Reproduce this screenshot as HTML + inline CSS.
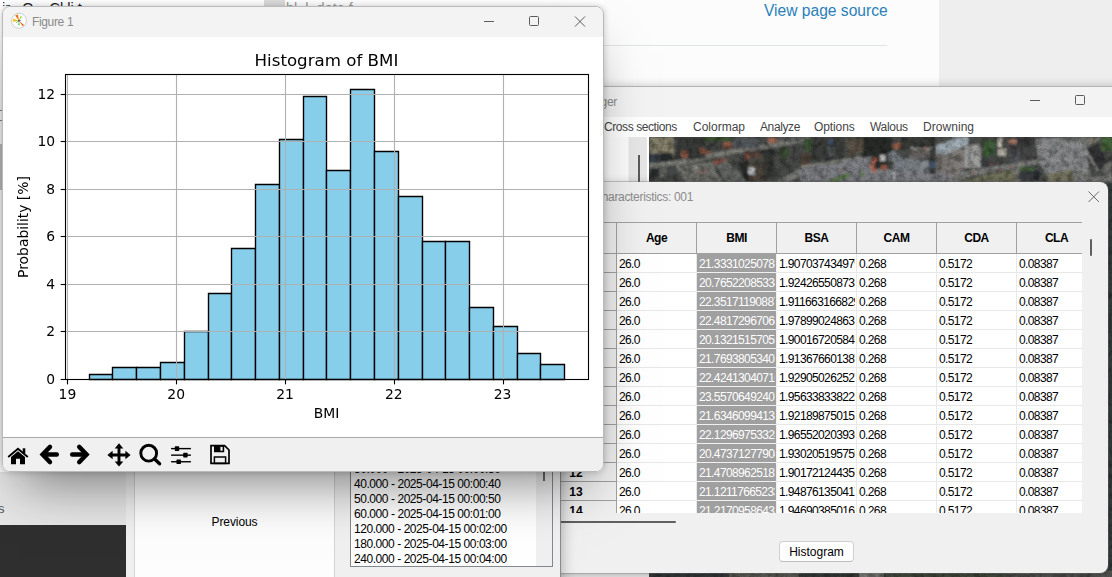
<!DOCTYPE html>
<html lang="en">
<head>
<meta charset="utf-8">
<title>Figure 1</title>
<style>
*{box-sizing:border-box;margin:0;padding:0}
html,body{width:1112px;height:577px;overflow:hidden;background:#fcfcfc}
body{font-family:"Liberation Sans",sans-serif;font-size:12px;color:#000;position:relative}
.abs{position:absolute}
#screen{position:absolute;left:0;top:0;width:1112px;height:577px;overflow:hidden;background:#fcfcfc}
/* browser page */
#rtd-side{left:939px;top:0;width:173px;height:90px;background:#eeeeee}
#vps{left:764px;top:1px;font-size:15.6px;line-height:19px;color:#2980b9;letter-spacing:0;white-space:nowrap}
#rtd-hr{left:590px;top:45px;width:297px;height:1px;background:#e1e4e5}
#topfrag{left:0;top:0;width:604px;height:6px;overflow:hidden;background:#fff}
#topfrag span{position:absolute;top:-1px;font-size:14.5px;line-height:18px;white-space:nowrap}
#leftstrip{left:0;top:0;width:3px;height:480px;background:#fff}
/* manager */
#mgr{left:380px;top:86px;width:760px;height:520px;background:#f0f0f0;border-top:1px solid #b4b4b4;box-shadow:0 0 9px rgba(0,0,0,.22)}
#mgr .tb{left:0;top:0;width:100%;height:30px;background:#f3f3f3}
#mgr .title{right:523px;top:8px;color:#8a8a8a;white-space:nowrap;line-height:15px;letter-spacing:-.3px}
#mgr .menu{left:0;top:30px;width:100%;height:20px;background:#fff}
#mgr .menu span{position:absolute;top:3px;line-height:14px;color:#444;white-space:nowrap}
#mgr .panel{left:224px;top:50px;width:45px;height:46px;background:linear-gradient(90deg,#fff 0,#fbfbfb 24px,#e6e6e6 25px,#e6e6e6 43px,#fff 43px)}
#mgr .pline{left:258px;top:68px;width:2px;height:28px;background:#5a5a5a}
#aerial{left:649px;top:137px;width:463px;height:440px}
/* dialog */
#dlg{left:430px;top:182px;width:678px;height:391px;background:#f0f0f0;border-radius:8px;box-shadow:0 0 0 1px rgba(120,120,120,.35),0 2px 10px rgba(0,0,0,.3);overflow:hidden}
#dlg .title{right:415px;top:8px;color:#8c8c8c;white-space:nowrap;line-height:15px;letter-spacing:-.32px}
.grid{left:130px;top:40px;width:522px;height:291px;overflow:hidden;background:#fff}
.grid .hd{position:absolute;top:0;height:32px;background:#f0f0f0;border-top:1px solid #a0a0a0;border-bottom:1px solid #a0a0a0;border-right:1px solid #a0a0a0;font-weight:bold;text-align:center;line-height:31px;letter-spacing:-.5px}
.grid .rl{position:absolute;left:0;width:57px;height:19px;background:#f0f0f0;border-bottom:1px solid #a0a0a0;border-right:1px solid #a0a0a0;font-weight:bold;line-height:20px}
.grid .rl b{position:absolute;left:0;width:32px;text-align:center}
.grid .c{position:absolute;height:19px;width:80px;border-right:1px solid #e8e8e8;border-bottom:1px solid #e8e8e8;line-height:20px;padding-left:2px;white-space:nowrap;overflow:hidden;letter-spacing:-.62px;background:#fff}
.grid .c span{display:block;width:76px;overflow:hidden}
.grid .c.s{background:#a0a0a0;color:#fff;border-right-color:#f0f0f0;border-bottom-color:#f0f0f0}
#hbtn{left:349px;top:359px;width:75px;height:21px;background:#fdfdfd;border:1px solid #d0d0d0;border-bottom-color:#bcbcbc;border-radius:4px;text-align:center;line-height:20px}
/* left window */
#lw{left:126px;top:300px;width:435px;height:300px;background:#f0f0f0;border-right:1px solid #8a8a8a;box-shadow:0 0 14px rgba(0,0,0,.32)}
#prev{left:8px;top:100px;width:201px;height:200px;background:#fdfdfd;border:1px solid #d4d4d4;text-align:center}
#prev span{position:absolute;left:0;width:100%;top:114px;line-height:15px;letter-spacing:-.1px}
#lb{left:224px;top:120px;width:203px;height:147px;background:#fff;border:1px solid #828790;overflow:hidden}
#lb .sb{left:185px;top:0;width:17px;height:100%;background:#f0f0f0}
#lb .th{left:192px;top:40px;width:2px;height:20px;background:#6a6a6a}
#lb div.l{position:absolute;left:3px;height:15px;line-height:15px;white-space:nowrap;letter-spacing:-.44px}
/* bottom-left */
#bl1{left:0;top:472px;width:126px;height:53px;background:#e6e6e6}
#bl1 span{position:absolute;left:-2px;top:29px;font-size:13px;color:#555}
#bl2{left:0;top:525px;width:126px;height:52px;background:#2f2f2f}
/* figure window */
#fig{left:2px;top:6px;width:602px;height:466px;border:1px solid #b9b9b9;border-radius:8px;background:#f0f0f0;overflow:hidden;}
#figshadow{left:2px;top:6px;width:602px;height:466px;border-radius:8px;box-shadow:0 0 6px rgba(0,0,0,.2),0 28px 52px -18px rgba(0,0,0,.5)}
#fig .tb{left:0;top:0;width:600px;height:30px;background:#f3f3f3}
#fig .title{left:29px;top:8px;color:#8a8a8a;line-height:15px;letter-spacing:-.35px;white-space:nowrap}
#fig .chart{position:absolute;left:0;top:30px;will-change:transform}
#fig .tool{left:0;top:430px;width:600px;height:34px;background:#f0f0f0;border-top:1px solid #a8a8a8}
</style>
</head>
<body>
<div id="screen">
<!-- background browser page -->
<div class="abs" id="rtd-side"></div>
<div class="abs" id="topfrag"><span style="left:2px;color:#222">ir &nbsp; O &nbsp;&nbsp; Cl li t</span><span style="left:286px;color:#999">bl &nbsp;l &nbsp;data f</span><i class="abs" style="left:264px;top:0;width:21px;height:6px;background:#dcdcdc"></i></div>
<div class="abs" id="vps">View page source</div>
<div class="abs" id="rtd-hr"></div>
<div class="abs" id="leftstrip"><i class="abs" style="left:0;top:110px;width:3px;height:1px;background:#888"></i><i class="abs" style="left:0;top:120px;width:3px;height:1px;background:#888"></i><i class="abs" style="left:0;top:144px;width:3px;height:46px;background:#c2c2c2"></i></div>

<!-- manager window -->
<div class="abs" id="mgr">
 <div class="abs tb"></div>
 <div class="abs title">WOLF - Manager</div>
 <svg class="abs" style="left:640px;top:3px" width="80" height="20" viewBox="0 0 80 20"><path d="M10 10.5H20" stroke="#5a5a5a" stroke-width="1" fill="none"/><rect x="55.5" y="5.5" width="9" height="9" rx="1" fill="none" stroke="#5a5a5a"/></svg>
 <div class="abs menu">
  <span style="left:224px;letter-spacing:-.42px">Cross sections</span>
  <span style="left:313px">Colormap</span>
  <span style="left:380px;letter-spacing:-.38px">Analyze</span>
  <span style="left:434px;letter-spacing:-.1px">Options</span>
  <span style="left:490px;letter-spacing:-.3px">Walous</span>
  <span style="left:543px;letter-spacing:.05px">Drowning</span>
 </div>
 <div class="abs panel"></div><div class="abs pline"></div>
</div>
<svg class="abs" id="aerial" width="463" height="440" viewBox="0 0 463 440">
<defs><filter id="ab" x="0" y="0" width="100%" height="100%"><feGaussianBlur stdDeviation="0.9"/></filter>
<filter id="an" x="0" y="0" width="100%" height="100%"><feTurbulence type="fractalNoise" baseFrequency="0.7" numOctaves="2" seed="7" result="n"/><feColorMatrix type="matrix" values="0 0 0 0 0  0 0 0 0 0  0 0 0 0 0  1.4 0 0 0 -0.45"/></filter>
<filter id="an2" x="0" y="0" width="100%" height="100%"><feTurbulence type="fractalNoise" baseFrequency="0.16" numOctaves="3" seed="3"/><feColorMatrix type="matrix" values="0 0 0 0 0  0 0 0 0 0  0 0 0 0 0  2.2 0 0 0 -0.85"/></filter></defs>
<rect width="463" height="440" fill="#4b4e4b"/><rect x="459" y="44" width="4" height="396" fill="#3a4444"/><rect x="0" y="434" width="100" height="6" fill="#3a3f3f"/><rect x="80" y="434" width="70" height="6" fill="#66685f"/><rect x="150" y="434" width="60" height="6" fill="#3d423f"/><rect x="210" y="434" width="25" height="6" fill="#8a8a86"/><rect x="235" y="434" width="120" height="6" fill="#4a5245"/><rect x="355" y="434" width="108" height="6" fill="#5a5c58"/>
<g filter="url(#ab)">
<rect x="0" y="0" width="25" height="20" fill="#8b8670"/>
<rect x="0" y="16.7" width="11" height="10.8" fill="#3b424c"/>
<rect x="11" y="16" width="13" height="11" fill="#2b2f2e"/>
<rect x="0" y="30" width="28" height="15" fill="#4a4c48"/>
<rect x="2" y="31" width="8" height="9" fill="#2f3231"/>
<rect x="11" y="32" width="6" height="10" fill="#6e6f6a"/>
<polyline points="0,29 32,25.3 68,18 96.7,12.4 140,5.2 160,1.5" fill="none" stroke="#85857f" stroke-width="5"/>
<polyline points="27,26 40,45" fill="none" stroke="#777873" stroke-width="5"/>
<polygon points="34,29 63.6,24.6 68,35.4 73.7,45 42,45" fill="#74756f"/>
<rect x="28.4" y="0.5" width="28" height="21.5" fill="#3a3c3a"/>
<rect x="32" y="13.8" width="7" height="7.2" fill="#8d5a48"/>
<rect x="50.7" y="11" width="11.3" height="5.7" fill="#8a5847"/>
<rect x="53.5" y="0" width="28.8" height="4.5" fill="#3c5433"/>
<rect x="56.4" y="4.5" width="17.6" height="9.5" fill="#454745"/>
<rect x="74.4" y="5.2" width="8.6" height="5.8" fill="#a66a55"/>
<rect x="83.8" y="1.6" width="27.2" height="9.9" fill="#565b5f"/>
<rect x="111" y="0" width="8" height="8" fill="#4a4d4c"/>
<rect x="119" y="0.9" width="8.7" height="5" fill="#a66a55"/>
<rect x="128" y="0" width="13" height="4" fill="#55585a"/>
<rect x="141" y="0" width="10" height="4.5" fill="#6a6e70"/>
<polygon points="65,24 76.6,21.7 99.6,45 76.6,45" fill="#6b6d6a"/>
<rect x="64.8" y="22.5" width="6" height="5" fill="#94594a"/>
<rect x="72.3" y="21" width="4.3" height="4.3" fill="#94594a"/>
<polygon points="88,25.3 99.6,23.9 105.4,45 96.7,45" fill="#2a2d2b"/>
<rect x="99.6" y="25.3" width="15.8" height="19.7" fill="#514a40"/>
<rect x="98.9" y="30.4" width="7.1" height="7.2" fill="#b8bcc0"/>
<rect x="95.3" y="13.8" width="17.2" height="7.9" fill="#5c4a40"/>
<rect x="96" y="17" width="3.6" height="6" fill="#94594a"/>
<rect x="112.5" y="12.4" width="13" height="5" fill="#2e3030"/>
<rect x="114" y="17.4" width="11.5" height="23.6" fill="#3a3b38"/>
<polygon points="125.5,12.4 131.2,11.7 139.9,31 134,35.4" fill="#454745"/>
<rect x="131" y="10.2" width="9" height="10.8" fill="#3d4f36"/>
<rect x="140" y="12.4" width="16" height="18.6" fill="#4a4c49"/>
<polyline points="130,47 158,31.5" fill="none" stroke="#7f807c" stroke-width="7"/>
<circle cx="46" cy="30" r="0.8" fill="#d8d8d8"/>
<circle cx="48" cy="31" r="0.8" fill="#cfcfcf"/>
<circle cx="50" cy="36" r="0.8" fill="#c03030"/>
<circle cx="53" cy="35" r="0.8" fill="#c03030"/>
<circle cx="56" cy="34" r="0.8" fill="#b82c2c"/>
<circle cx="60" cy="40" r="0.8" fill="#333"/>
<circle cx="45" cy="38" r="0.8" fill="#444"/>
<rect x="155" y="1" width="15" height="13" fill="#3f5639"/>
<rect x="151" y="16.7" width="11.5" height="13" fill="#55493f"/>
<rect x="162.5" y="1" width="33.1" height="21.5" fill="#3e3f3d"/>
<rect x="180" y="3" width="4" height="5" fill="#4a5f80"/>
<rect x="178" y="10" width="8" height="10" fill="#55585a"/>
<polygon points="197,2.3 214.3,0 218.6,13.8 200,19.6" fill="#5f564c"/>
<rect x="214" y="0" width="29" height="19.6" fill="#2b2e2c"/>
<polygon points="151,32 180,27 212,21 222,20 222,45 151,45" fill="#84858a"/>
<rect x="215" y="32.5" width="97" height="12.5" fill="#84858a"/>
<polyline points="151,30 180,25.5 212,20" fill="none" stroke="#a09f98" stroke-width="1.6"/>
<polygon points="175.5,45 198.5,36 202.8,39 187,45" fill="#5f7d4c"/>
<polygon points="212,31.8 216.5,39.7 211.4,39.7" fill="#5c7c4a"/>
<rect x="225.8" y="16.7" width="11.5" height="14.3" fill="#2e3033"/>
<path d="M228 21 Q219 27 227 35" fill="none" stroke="#b5654d" stroke-width="3.5"/>
<rect x="231" y="18" width="5" height="6" fill="#d8d8d8"/>
<rect x="232" y="28" width="6" height="5" fill="#b06a55"/>
<polygon points="243,8 251.7,4.5 253.9,10.2 246,13" fill="#a5654f"/>
<polygon points="237.3,16.7 246,13 251.7,21 243,25.3" fill="#787d82"/>
<rect x="244.5" y="21" width="14.5" height="13" fill="#7d8389"/>
<rect x="259.6" y="21.7" width="10.8" height="11.5" fill="#868c92"/>
<rect x="271" y="23" width="8.8" height="11.7" fill="#8a9096"/>
<rect x="251.7" y="0" width="34.3" height="12.4" fill="#3b3d3a"/>
<rect x="260" y="13" width="26" height="8.7" fill="#6e6b68"/>
<circle cx="263" cy="11" r="0.9" fill="#e0e0d8"/>
<circle cx="266" cy="12" r="0.9" fill="#e0e0d8"/>
<circle cx="269" cy="11.5" r="0.9" fill="#e0e0d8"/>
<circle cx="272" cy="12" r="0.9" fill="#e0e0d8"/>
<circle cx="276" cy="11" r="0.9" fill="#e0e0d8"/>
<circle cx="279" cy="12" r="0.9" fill="#e0e0d8"/>
<circle cx="282" cy="11" r="0.9" fill="#e0e0d8"/>
<circle cx="277" cy="11.5" r="0.9" fill="#c83030"/>
<polygon points="287,8 311,0 320,0 320,8 287,21" fill="#a9b4bd"/>
<rect x="287" y="16.7" width="25" height="18.7" fill="#7a7773"/>
<circle cx="300" cy="14" r="0.9" fill="#e4e4e0"/>
<circle cx="303" cy="15" r="0.9" fill="#e4e4e0"/>
<circle cx="306" cy="14" r="0.9" fill="#e4e4e0"/>
<circle cx="302" cy="24" r="0.9" fill="#e4e4e0"/>
<circle cx="305" cy="25" r="0.9" fill="#e4e4e0"/>
<circle cx="308" cy="24" r="0.9" fill="#e4e4e0"/>
<circle cx="310" cy="30" r="0.9" fill="#e4e4e0"/>
<circle cx="298" cy="31" r="0.9" fill="#e4e4e0"/>
<rect x="280.5" y="12.4" width="6.5" height="24.4" fill="#3a3c3a"/>
<rect x="282" y="25" width="4" height="6" fill="#42597a"/>
<rect x="244" y="36" width="1.6" height="6" fill="#e8e8e8"/>
<circle cx="170" cy="36" r="0.8" fill="#444"/>
<circle cx="196" cy="31" r="0.8" fill="#333"/>
<circle cx="194" cy="33" r="0.8" fill="#b03030"/>
<circle cx="230" cy="38" r="0.8" fill="#222"/>
<circle cx="236" cy="39" r="0.8" fill="#222"/>
<circle cx="250" cy="40" r="0.8" fill="#333"/>
<circle cx="262" cy="41" r="0.8" fill="#222"/>
<circle cx="290" cy="41" r="0.8" fill="#333"/>
<circle cx="300" cy="39" r="0.8" fill="#a33"/>
<polygon points="303,0 317.4,0 318,7.4 303,13.8" fill="#a8b5be"/>
<rect x="303" y="12.4" width="13.7" height="20.1" fill="#85827e"/>
<rect x="316" y="7.4" width="15.8" height="23.6" fill="#a5a5a3"/>
<rect x="320" y="15" width="2" height="8" fill="#8a96a0"/>
<rect x="334" y="3.8" width="12" height="17.2" fill="#41613a"/>
<rect x="331.8" y="21" width="6.2" height="10" fill="#3a3e44"/>
<rect x="338" y="18" width="11" height="12" fill="#4a4c4a"/>
<rect x="346" y="0" width="12" height="19.6" fill="#50504e"/>
<rect x="349" y="1" width="4" height="9" fill="#cfcdc0"/>
<rect x="349" y="12" width="8" height="7" fill="#c4c1b2"/>
<rect x="359.8" y="2.3" width="7.9" height="6.5" fill="#b07a66"/>
<rect x="357.7" y="6.6" width="25.9" height="18.7" fill="#484a4a"/>
<rect x="368" y="0" width="18" height="8" fill="#3c3e3e"/>
<rect x="360" y="15" width="10" height="10" fill="#55585c"/>
<polygon points="303,35.4 339,30.4 389.3,21.7 392.2,26.8 339,36.1 303,45" fill="#82827f"/>
<polygon points="310,45 339,36.8 366.3,32.5 366.3,45" fill="#75775f"/>
<rect x="366" y="30" width="6" height="15" fill="#7d7d7a"/>
<rect x="370" y="34" width="15" height="8.6" fill="#3b3d40"/>
<rect x="370.6" y="29.7" width="14.4" height="4.3" fill="#44603c"/>
<rect x="385" y="33" width="5" height="10" fill="#2e3236"/>
<polygon points="386.5,0.9 436.8,0.9 436.8,9.5 441,35.4 396.5,36.8 389.3,23.9" fill="#8c8e8f"/>
<rect x="409.5" y="0" width="28.5" height="3.8" fill="#777977"/>
<polygon points="396.5,37.6 422.4,32.5 425.3,45 398,45" fill="#7b7a66"/>
<polygon points="422.4,32.5 441,35.4 445,45 425.3,45" fill="#80817e"/>
<polygon points="436.8,11.7 448.3,5.9 460.5,26.8 449.8,34" fill="#38393b"/>
<polyline points="436.3,12 449.3,34.7" fill="none" stroke="#b0b0aa" stroke-width="1.5"/>
<polygon points="436.8,0 452,0 448,6 437,11" fill="#7a7a70"/>
<rect x="452.6" y="0" width="10.4" height="13.8" fill="#4a6a3d"/>
<polygon points="429.6,45 463,35.4 463,45" fill="#80817e"/>
<polygon points="455,28 463,24 463,35 452,36" fill="#6f706c"/>
<circle cx="405" cy="10" r="0.8" fill="#333"/>
<circle cx="407" cy="12" r="0.8" fill="#2a2a2a"/>
<circle cx="409" cy="14" r="0.8" fill="#333"/>
<circle cx="404" cy="22" r="0.8" fill="#e8e8e0"/>
<circle cx="406" cy="24" r="0.8" fill="#f0e8c0"/>
<circle cx="410" cy="23" r="0.8" fill="#ddd"/>
<circle cx="413" cy="24" r="0.8" fill="#333"/>
<circle cx="416" cy="22" r="0.8" fill="#ddd"/>
<circle cx="398" cy="28" r="0.8" fill="#444"/>
<circle cx="420" cy="27" r="0.8" fill="#333"/>
<circle cx="430" cy="25" r="0.8" fill="#2e4a7a"/>
<circle cx="432" cy="29" r="0.8" fill="#333"/>
<circle cx="425" cy="17" r="0.8" fill="#333"/>
<circle cx="434" cy="20" r="0.8" fill="#333"/>
<circle cx="412" cy="18" r="0.8" fill="#444"/>
<circle cx="427" cy="31" r="0.8" fill="#333"/>
<circle cx="440" cy="33" r="0.8" fill="#444"/>
<circle cx="392" cy="12" r="0.8" fill="#b03030"/>
<circle cx="343" cy="27" r="0.8" fill="#c44"/>
<circle cx="347" cy="31" r="0.8" fill="#d8d8d8"/>
<circle cx="352" cy="33" r="0.8" fill="#c33"/>
<circle cx="358" cy="31" r="0.8" fill="#ddd"/>
<circle cx="362" cy="30" r="0.8" fill="#c33"/>
<circle cx="326" cy="36" r="0.8" fill="#c33"/>
<circle cx="363" cy="42" r="0.8" fill="#c33"/>
</g>
<rect width="463" height="440" filter="url(#an2)" opacity=".33"/>
<rect width="463" height="440" filter="url(#an)" opacity=".2"/>
</svg>

<!-- dialog -->
<div class="abs" id="dlg">
 <div class="abs title">Characteristics: 001</div>
 <svg class="abs" style="left:657px;top:8px" width="14" height="14" viewBox="0 0 14 14"><path d="M1.5 1.5L12 12M12 1.5L1.5 12" stroke="#6a6a6a" stroke-width="1" fill="none"/></svg>
 <div class="abs grid">
<div class="hd" style="left:0;width:57px"></div>
<div class="hd" style="left:57px;width:80px">Age</div>
<div class="hd" style="left:137px;width:80px">BMI</div>
<div class="hd" style="left:217px;width:80px">BSA</div>
<div class="hd" style="left:297px;width:80px">CAM</div>
<div class="hd" style="left:377px;width:80px">CDA</div>
<div class="hd" style="left:457px;width:80px">CLA</div>
<div class="hd" style="left:537px;width:80px">CMA</div>
<div class="rl" style="top:32px"><b>1</b></div>
<div class="c" style="left:57px;top:32px"><span>26.0</span></div>
<div class="c s" style="left:137px;top:32px"><span>21.33310250784</span></div>
<div class="c" style="left:217px;top:32px"><span>1.907037434979</span></div>
<div class="c" style="left:297px;top:32px"><span>0.268</span></div>
<div class="c" style="left:377px;top:32px"><span>0.5172</span></div>
<div class="c" style="left:457px;top:32px"><span>0.08387</span></div>
<div class="c" style="left:537px;top:32px"><span>0.3</span></div>
<div class="rl" style="top:51px"><b>2</b></div>
<div class="c" style="left:57px;top:51px"><span>26.0</span></div>
<div class="c s" style="left:137px;top:51px"><span>20.76522085334</span></div>
<div class="c" style="left:217px;top:51px"><span>1.924265508733</span></div>
<div class="c" style="left:297px;top:51px"><span>0.268</span></div>
<div class="c" style="left:377px;top:51px"><span>0.5172</span></div>
<div class="c" style="left:457px;top:51px"><span>0.08387</span></div>
<div class="c" style="left:537px;top:51px"><span>0.3</span></div>
<div class="rl" style="top:70px"><b>3</b></div>
<div class="c" style="left:57px;top:70px"><span>26.0</span></div>
<div class="c s" style="left:137px;top:70px"><span>22.35171190887</span></div>
<div class="c" style="left:217px;top:70px"><span>1.911663166829</span></div>
<div class="c" style="left:297px;top:70px"><span>0.268</span></div>
<div class="c" style="left:377px;top:70px"><span>0.5172</span></div>
<div class="c" style="left:457px;top:70px"><span>0.08387</span></div>
<div class="c" style="left:537px;top:70px"><span>0.3</span></div>
<div class="rl" style="top:89px"><b>4</b></div>
<div class="c" style="left:57px;top:89px"><span>26.0</span></div>
<div class="c s" style="left:137px;top:89px"><span>22.48172967064</span></div>
<div class="c" style="left:217px;top:89px"><span>1.978990248631</span></div>
<div class="c" style="left:297px;top:89px"><span>0.268</span></div>
<div class="c" style="left:377px;top:89px"><span>0.5172</span></div>
<div class="c" style="left:457px;top:89px"><span>0.08387</span></div>
<div class="c" style="left:537px;top:89px"><span>0.3</span></div>
<div class="rl" style="top:108px"><b>5</b></div>
<div class="c" style="left:57px;top:108px"><span>26.0</span></div>
<div class="c s" style="left:137px;top:108px"><span>20.13215157055</span></div>
<div class="c" style="left:217px;top:108px"><span>1.900167205845</span></div>
<div class="c" style="left:297px;top:108px"><span>0.268</span></div>
<div class="c" style="left:377px;top:108px"><span>0.5172</span></div>
<div class="c" style="left:457px;top:108px"><span>0.08387</span></div>
<div class="c" style="left:537px;top:108px"><span>0.3</span></div>
<div class="rl" style="top:127px"><b>6</b></div>
<div class="c" style="left:57px;top:127px"><span>26.0</span></div>
<div class="c s" style="left:137px;top:127px"><span>21.76938053407</span></div>
<div class="c" style="left:217px;top:127px"><span>1.913676601387</span></div>
<div class="c" style="left:297px;top:127px"><span>0.268</span></div>
<div class="c" style="left:377px;top:127px"><span>0.5172</span></div>
<div class="c" style="left:457px;top:127px"><span>0.08387</span></div>
<div class="c" style="left:537px;top:127px"><span>0.3</span></div>
<div class="rl" style="top:146px"><b>7</b></div>
<div class="c" style="left:57px;top:146px"><span>26.0</span></div>
<div class="c s" style="left:137px;top:146px"><span>22.42413040716</span></div>
<div class="c" style="left:217px;top:146px"><span>1.929050262527</span></div>
<div class="c" style="left:297px;top:146px"><span>0.268</span></div>
<div class="c" style="left:377px;top:146px"><span>0.5172</span></div>
<div class="c" style="left:457px;top:146px"><span>0.08387</span></div>
<div class="c" style="left:537px;top:146px"><span>0.3</span></div>
<div class="rl" style="top:165px"><b>8</b></div>
<div class="c" style="left:57px;top:165px"><span>26.0</span></div>
<div class="c s" style="left:137px;top:165px"><span>23.55706492407</span></div>
<div class="c" style="left:217px;top:165px"><span>1.956338338225</span></div>
<div class="c" style="left:297px;top:165px"><span>0.268</span></div>
<div class="c" style="left:377px;top:165px"><span>0.5172</span></div>
<div class="c" style="left:457px;top:165px"><span>0.08387</span></div>
<div class="c" style="left:537px;top:165px"><span>0.3</span></div>
<div class="rl" style="top:184px"><b>9</b></div>
<div class="c" style="left:57px;top:184px"><span>26.0</span></div>
<div class="c s" style="left:137px;top:184px"><span>21.63460994134</span></div>
<div class="c" style="left:217px;top:184px"><span>1.921898750152</span></div>
<div class="c" style="left:297px;top:184px"><span>0.268</span></div>
<div class="c" style="left:377px;top:184px"><span>0.5172</span></div>
<div class="c" style="left:457px;top:184px"><span>0.08387</span></div>
<div class="c" style="left:537px;top:184px"><span>0.3</span></div>
<div class="rl" style="top:203px"><b>10</b></div>
<div class="c" style="left:57px;top:203px"><span>26.0</span></div>
<div class="c s" style="left:137px;top:203px"><span>22.12969753324</span></div>
<div class="c" style="left:217px;top:203px"><span>1.965520203936</span></div>
<div class="c" style="left:297px;top:203px"><span>0.268</span></div>
<div class="c" style="left:377px;top:203px"><span>0.5172</span></div>
<div class="c" style="left:457px;top:203px"><span>0.08387</span></div>
<div class="c" style="left:537px;top:203px"><span>0.3</span></div>
<div class="rl" style="top:222px"><b>11</b></div>
<div class="c" style="left:57px;top:222px"><span>26.0</span></div>
<div class="c s" style="left:137px;top:222px"><span>20.47371277904</span></div>
<div class="c" style="left:217px;top:222px"><span>1.930205195759</span></div>
<div class="c" style="left:297px;top:222px"><span>0.268</span></div>
<div class="c" style="left:377px;top:222px"><span>0.5172</span></div>
<div class="c" style="left:457px;top:222px"><span>0.08387</span></div>
<div class="c" style="left:537px;top:222px"><span>0.3</span></div>
<div class="rl" style="top:241px"><b>12</b></div>
<div class="c" style="left:57px;top:241px"><span>26.0</span></div>
<div class="c s" style="left:137px;top:241px"><span>21.47089625187</span></div>
<div class="c" style="left:217px;top:241px"><span>1.901721244356</span></div>
<div class="c" style="left:297px;top:241px"><span>0.268</span></div>
<div class="c" style="left:377px;top:241px"><span>0.5172</span></div>
<div class="c" style="left:457px;top:241px"><span>0.08387</span></div>
<div class="c" style="left:537px;top:241px"><span>0.3</span></div>
<div class="rl" style="top:260px"><b>13</b></div>
<div class="c" style="left:57px;top:260px"><span>26.0</span></div>
<div class="c s" style="left:137px;top:260px"><span>21.12117665233</span></div>
<div class="c" style="left:217px;top:260px"><span>1.948761350417</span></div>
<div class="c" style="left:297px;top:260px"><span>0.268</span></div>
<div class="c" style="left:377px;top:260px"><span>0.5172</span></div>
<div class="c" style="left:457px;top:260px"><span>0.08387</span></div>
<div class="c" style="left:537px;top:260px"><span>0.3</span></div>
<div class="rl" style="top:279px"><b>14</b></div>
<div class="c" style="left:57px;top:279px"><span>26.0</span></div>
<div class="c s" style="left:137px;top:279px"><span>21.21709586433</span></div>
<div class="c" style="left:217px;top:279px"><span>1.946903850168</span></div>
<div class="c" style="left:297px;top:279px"><span>0.268</span></div>
<div class="c" style="left:377px;top:279px"><span>0.5172</span></div>
<div class="c" style="left:457px;top:279px"><span>0.08387</span></div>
<div class="c" style="left:537px;top:279px"><span>0.3</span></div>
<div class="rl" style="top:298px"><b>15</b></div>
<div class="c" style="left:57px;top:298px"><span>26.0</span></div>
<div class="c s" style="left:137px;top:298px"><span>21.33310250784</span></div>
<div class="c" style="left:217px;top:298px"><span>1.907037434979</span></div>
<div class="c" style="left:297px;top:298px"><span>0.268</span></div>
<div class="c" style="left:377px;top:298px"><span>0.5172</span></div>
<div class="c" style="left:457px;top:298px"><span>0.08387</span></div>
<div class="c" style="left:537px;top:298px"><span>0.3</span></div>
 </div>
 <i class="abs" style="left:660px;top:57px;width:2px;height:17px;background:#606060;border-radius:1px"></i>
 <i class="abs" style="left:100px;top:339px;width:146px;height:2px;background:#606060;border-radius:1px"></i>
 <div class="abs" id="hbtn">Histogram</div>
</div>

<!-- left window -->
<div class="abs" id="lw">
 <div class="abs" id="prev"><span>Previous</span></div>
 <div class="abs" id="lb">
  <div class="l" style="top:41px">30.000 - 2025-04-15 00:00:30</div>
  <div class="l" style="top:56px">40.000 - 2025-04-15 00:00:40</div>
  <div class="l" style="top:71px">50.000 - 2025-04-15 00:00:50</div>
  <div class="l" style="top:86px">60.000 - 2025-04-15 00:01:00</div>
  <div class="l" style="top:101px">120.000 - 2025-04-15 00:02:00</div>
  <div class="l" style="top:116px">180.000 - 2025-04-15 00:03:00</div>
  <div class="l" style="top:131px">240.000 - 2025-04-15 00:04:00</div>
  <div class="abs sb"></div><div class="abs th"></div>
 </div>
</div>
<div class="abs" id="bl1"><span>s</span></div>
<div class="abs" id="bl2"></div>

<!-- Figure window -->
<div class="abs" id="figshadow"></div>
<div class="abs" id="fig">
 <div class="abs tb"></div>
<svg class="abs" style="left:6px;top:3px" width="20" height="20" viewBox="-10 -10.75 20 20"><circle cx="0" cy="0" r="7.5" fill="#fff" stroke="#c6c6c6" stroke-width=".9"/>
<path d="M0 0L-3.8 -5.3L-1.1 -6.3Z" fill="#f26a0e"/><path d="M0 0L5.1 4.3L3.7 5.4Z" fill="#e3630f"/>
<path d="M0 0L-5.9 -2L-5.9 .9Z" fill="#f5b90c"/><path d="M0 0L1.3 -4.5L3.1 -4.2Z" fill="#9bd430"/>
<path d="M0 0L-1.1 4.5L.9 4.5Z" fill="#6fd36a"/><path d="M0 0L-2.9 1.4L-2.3 2.2Z" fill="#2a9a8a"/><path d="M0 0L2 -.8L2 .1Z" fill="#2a4a9a"/><circle cx="0" cy="0" r=".9" fill="#3a4a2a"/></svg>
 <div class="abs title">Figure 1</div>
 <svg class="abs" style="left:470px;top:0" width="130" height="30" viewBox="0 0 130 30"><g stroke="#5c5c5c" stroke-width="1" fill="none"><path d="M11 14.5H21"/><rect x="56.5" y="9.5" width="9" height="9" rx="1"/><path d="M102 9.5L112 19.5M112 9.5L102 19.5"/></g></svg>
<svg class="chart" width="600" height="400" viewBox="0 0 600 400">
<rect width="600" height="400" fill="#fff"/>
<g fill="#87ceeb" stroke="#000" stroke-width="1.39" stroke-linejoin="miter">
<path d="M86.5 342.5V337.5H109.5V342.5Z"/>
<path d="M109.5 342.5V330.5H133.5V342.5Z"/>
<path d="M133.5 342.5V330.5H157.5V342.5Z"/>
<path d="M157.5 342.5V325.5H181.5V342.5Z"/>
<path d="M181.5 342.5V294.5H205.5V342.5Z"/>
<path d="M205.5 342.5V256.5H228.5V342.5Z"/>
<path d="M228.5 342.5V211.5H252.5V342.5Z"/>
<path d="M252.5 342.5V147.5H276.5V342.5Z"/>
<path d="M276.5 342.5V102.5H300.5V342.5Z"/>
<path d="M300.5 342.5V59.5H323.5V342.5Z"/>
<path d="M323.5 342.5V133.5H347.5V342.5Z"/>
<path d="M347.5 342.5V52.5H371.5V342.5Z"/>
<path d="M371.5 342.5V114.5H395.5V342.5Z"/>
<path d="M395.5 342.5V159.5H419.5V342.5Z"/>
<path d="M419.5 342.5V204.5H442.5V342.5Z"/>
<path d="M442.5 342.5V204.5H466.5V342.5Z"/>
<path d="M466.5 342.5V270.5H490.5V342.5Z"/>
<path d="M490.5 342.5V289.5H514.5V342.5Z"/>
<path d="M514.5 342.5V316.5H537.5V342.5Z"/>
<path d="M537.5 342.5V327.5H561.5V342.5Z"/>
</g>
<g stroke="#b0b0b0" stroke-width="1.11" fill="none">
<path d="M64.5 342.5V37.5"/>
<path d="M173.5 342.5V37.5"/>
<path d="M282.5 342.5V37.5"/>
<path d="M391.5 342.5V37.5"/>
<path d="M500.5 342.5V37.5"/>
<path d="M62.5 342.5H585.5"/>
<path d="M62.5 294.5H585.5"/>
<path d="M62.5 247.5H585.5"/>
<path d="M62.5 199.5H585.5"/>
<path d="M62.5 152.5H585.5"/>
<path d="M62.5 104.5H585.5"/>
<path d="M62.5 57.5H585.5"/>
</g>
<g stroke="#000" stroke-width="1.11" fill="none">
<path d="M64.5 342.5v4.86"/>
<path d="M173.5 342.5v4.86"/>
<path d="M282.5 342.5v4.86"/>
<path d="M391.5 342.5v4.86"/>
<path d="M500.5 342.5v4.86"/>
<path d="M62.5 342.5h-4.86"/>
<path d="M62.5 294.5h-4.86"/>
<path d="M62.5 247.5h-4.86"/>
<path d="M62.5 199.5h-4.86"/>
<path d="M62.5 152.5h-4.86"/>
<path d="M62.5 104.5h-4.86"/>
<path d="M62.5 57.5h-4.86"/>
<rect x="62.5" y="37.5" width="523" height="305" stroke-linecap="square"/>
</g>
<g font-family="'DejaVu Sans', sans-serif" font-size="13.89" fill="#000">
<text x="64.4" y="362" text-anchor="middle">19</text>
<text x="173.19" y="362" text-anchor="middle">20</text>
<text x="281.99" y="362" text-anchor="middle">21</text>
<text x="390.78" y="362" text-anchor="middle">22</text>
<text x="499.58" y="362" text-anchor="middle">23</text>
<text x="52.18" y="347" text-anchor="end">0</text>
<text x="52.18" y="299.48" text-anchor="end">2</text>
<text x="52.18" y="251.95" text-anchor="end">4</text>
<text x="52.18" y="204.43" text-anchor="end">6</text>
<text x="52.18" y="156.9" text-anchor="end">8</text>
<text x="52.18" y="109.38" text-anchor="end">10</text>
<text x="52.18" y="61.86" text-anchor="end">12</text>
<text x="323.45" y="381" text-anchor="middle">BMI</text>
<text transform="translate(25.26 190.03) rotate(-90)" text-anchor="middle">Probability [%]</text>
<text x="323.45" y="29" text-anchor="middle" font-size="16.67">Histogram of BMI</text>
</g></svg>
 <div class="abs tool">
<svg class="abs" style="left:0;top:0" width="600" height="33" viewBox="0 0 600 33"><g fill="#000" stroke="none">
<polygon points="15.00,9.40 25.40,18.30 24.20,19.70 15.00,11.90 5.80,19.70 4.60,18.30"/>
<polygon points="15.00,13.20 22.00,19.10 22.00,26.20 17.00,26.20 17.00,20.80 13.00,20.80 13.00,26.20 8.00,26.20 8.00,19.10"/>
<rect x="19.70" y="10.30" width="2.6" height="5"/>
<g fill="none" stroke="#000" stroke-width="4.4" stroke-linecap="round" stroke-linejoin="miter">
<path d="M53.80 16.50H41.00"/>
<path d="M47.00 8.90L39.60 16.50L47.00 24.10"/>
<path d="M69.20 16.50H82.00"/>
<path d="M76.20 8.90L83.60 16.50L76.20 24.10"/>
</g>
<path d="M116.00 9.00V25.00M108.00 17.00H124.00" stroke="#000" stroke-width="2.9" fill="none"/>
<polygon points="116.00,5.20 120.30,10.50 111.70,10.50"/>
<polygon points="116.00,28.60 120.30,23.40 111.70,23.40"/>
<polygon points="104.40,17.00 109.60,12.70 109.60,21.30"/>
<polygon points="127.60,17.00 122.40,12.70 122.40,21.30"/>
<circle cx="145.70" cy="15.20" r="7.9" fill="none" stroke="#000" stroke-width="2.9"/>
<path d="M151.60 21.00L156.60 25.80" stroke="#000" stroke-width="3.3" stroke-linecap="round" fill="none"/>
<rect x="168.10" y="9.90" width="19.8" height="1.4"/>
<rect x="171.80" y="8.30" width="4.4" height="4.6" rx=".6"/>
<rect x="168.10" y="16.45" width="19.8" height="1.4"/>
<rect x="180.20" y="14.85" width="4.4" height="4.6" rx=".6"/>
<rect x="168.10" y="23.05" width="19.8" height="1.4"/>
<rect x="173.50" y="21.45" width="4.4" height="4.6" rx=".6"/>
<path d="M208.00 7.60H221.60L226.00 12.00V25.30H208.00Z" fill="none" stroke="#000" stroke-width="1.7" stroke-linejoin="miter"/>
<path d="M211.00 7.60H221.20V14.20H211.00ZM217.40 8.80V12.80H219.60V8.80Z" fill-rule="evenodd"/>
<rect x="211.40" y="19.00" width="11.2" height="6.4" fill="none" stroke="#000" stroke-width="1.5"/>
</g></svg>
 </div>
</div>
</div>
</body>
</html>
